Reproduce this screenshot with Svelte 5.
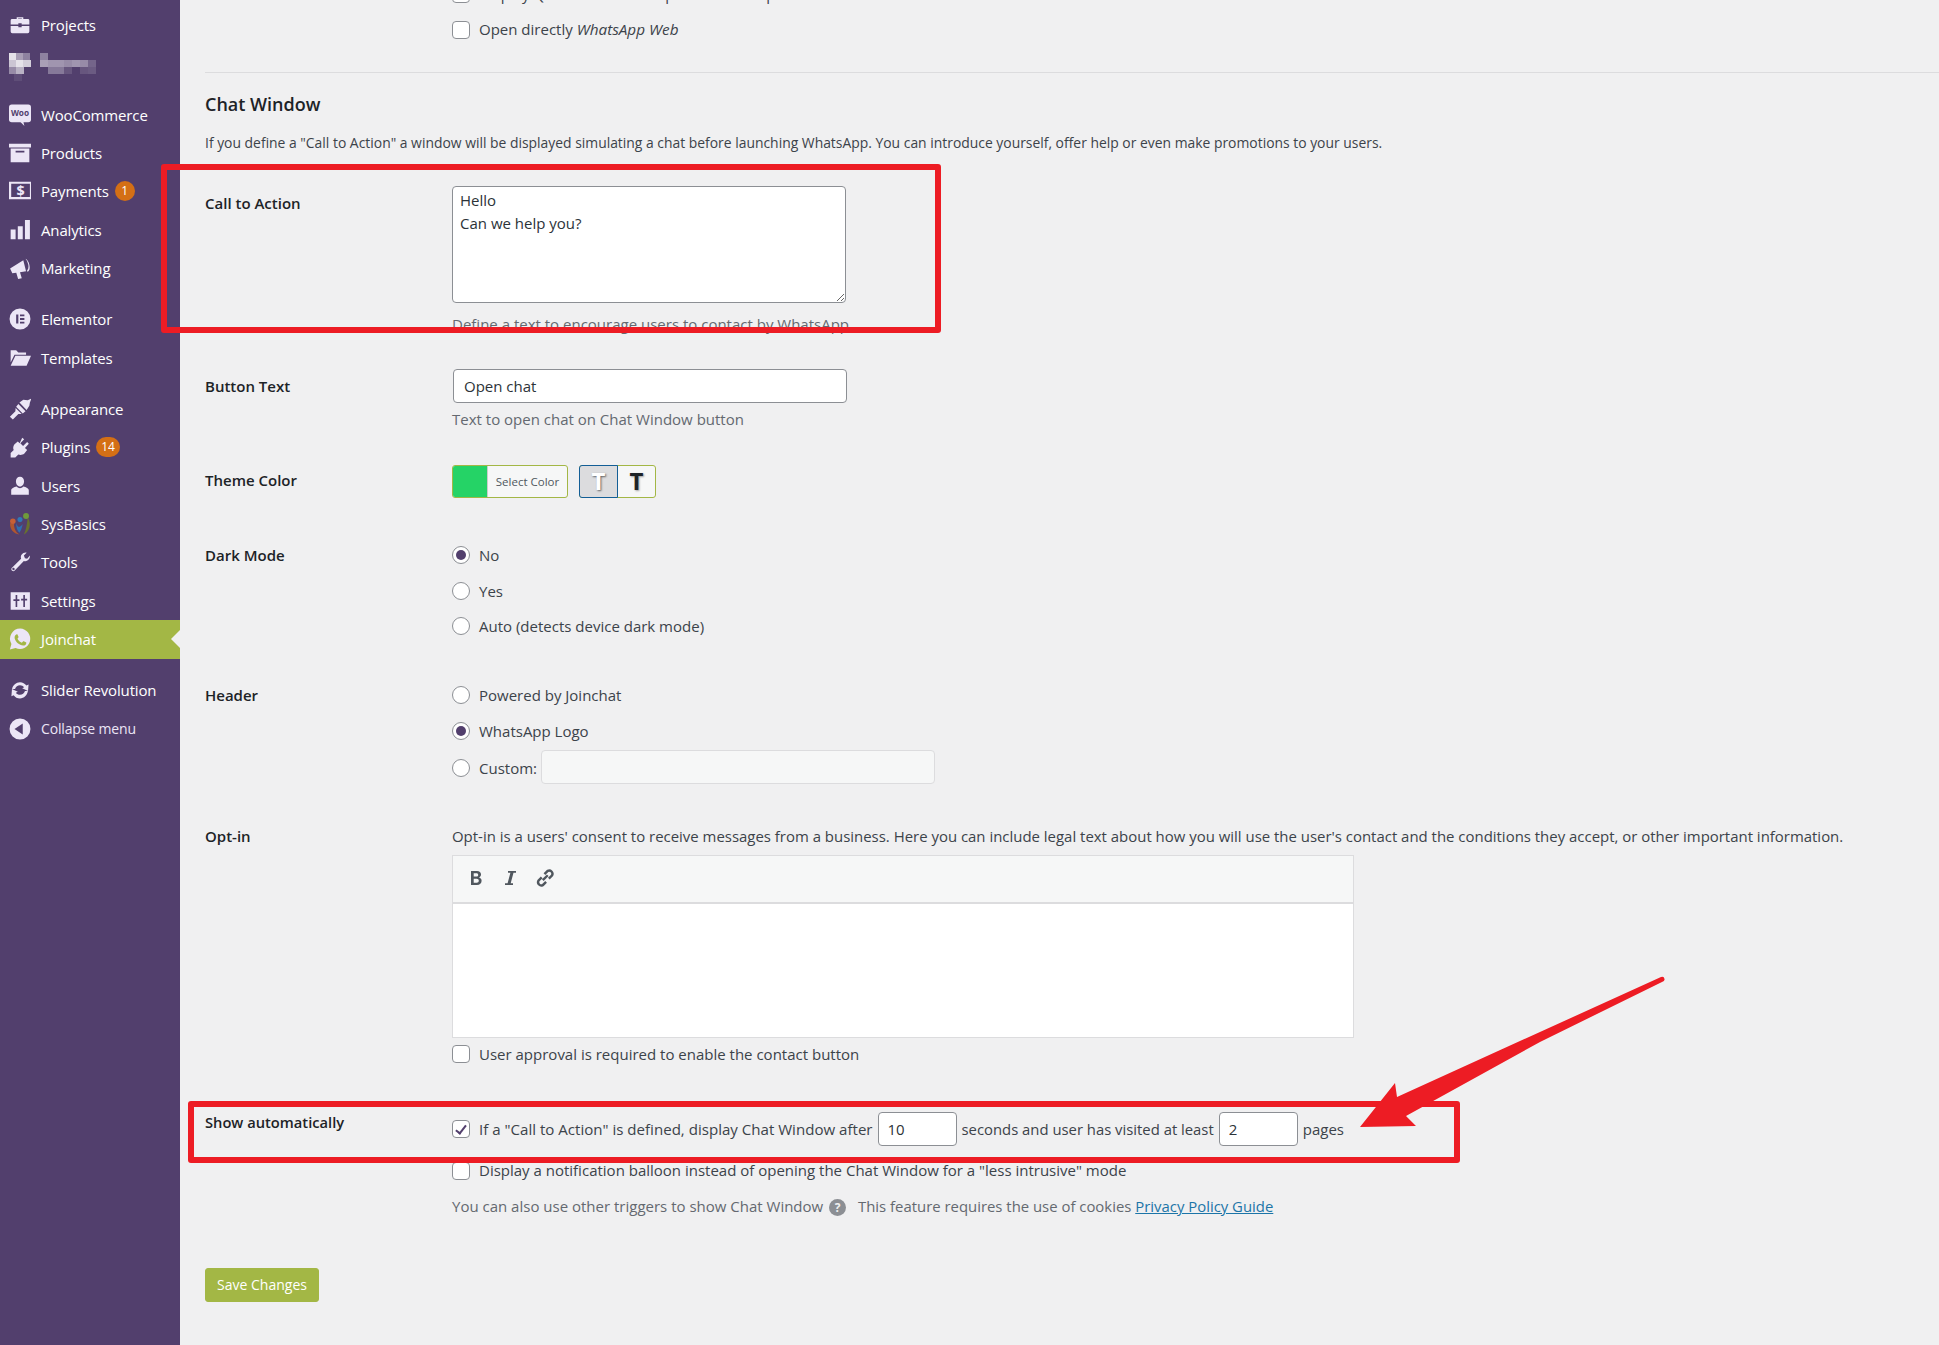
<script>
const menu = [
	{ id: "projects", label: "Projects" },
	{ id: "blur", gap: false },
	{ id: "woo", label: "WooCommerce", sep: true },
	{ id: "products", label: "Products" },
	{ id: "payments", label: "Payments", badge: "1" },
	{ id: "analytics", label: "Analytics" },
	{ id: "marketing", label: "Marketing" },
	{ id: "elementor", label: "Elementor", sep: true },
	{ id: "templates", label: "Templates" },
	{ id: "appearance", label: "Appearance", sep: true },
	{ id: "plugins", label: "Plugins", badge: "14" },
	{ id: "users", label: "Users" },
	{ id: "sysbasics", label: "SysBasics" },
	{ id: "tools", label: "Tools" },
	{ id: "settings", label: "Settings" },
	{ id: "joinchat", label: "Joinchat", active: true },
	{ id: "slider", label: "Slider Revolution", sep: true },
	{ id: "collapse", label: "Collapse menu", small: true }
];

const mosaic = [
	[0, 0, 7, 0.85], [7, 0, 7, 0.5], [14, 0, 7, 0.35], [0, 7, 7, 0.7], [7, 7, 7, 0.85], [14, 7, 8, 0.75],
	[0, 14, 7, 0.4], [7, 14, 8, 0.6], [5, 21, 8, 0.08],
	[31, 0, 8, 0.35], [31, 7, 8, 0.5], [39, 7, 8, 0.45], [47, 7, 8, 0.45], [55, 7, 8, 0.4], [63, 7, 8, 0.45], [71, 7, 8, 0.4], [79, 7, 8, 0.2],
	[39, 14, 8, 0.3], [47, 14, 8, 0.3], [55, 14, 8, 0.12], [71, 14, 8, 0.12], [79, 14, 8, 0.15]
];

const ctaText = "Hello\nCan we help you?";
</script>

<div class="page">
	<nav class="sidebar">
		{#each menu as item}
			{#if item.id === "blur"}
				<div class="item blurred">
					<svg width="90" height="30" viewBox="0 0 90 30">
						{#each mosaic as [x, y, w, o]}
							<rect {x} {y} width={w} height="7" fill="#fff" opacity={o} />
						{/each}
					</svg>
				</div>
			{:else}
				<a class="item" class:sep={item.sep} class:active={item.active} class:small={item.small} href="#top">
					<svg class="icon" viewBox="0 0 20 20" width="22" height="22" fill="currentColor">
						{#if item.id === "projects"}
							<path d="M7 4.500V3h6v1.500h4.200q1.300 0 1.300 1.300V9.500h-7V8.500h-3v1h-7V5.800q0-1.300 1.300-1.300zM8.300 4.500h3.400V4H8.300zM1.500 10.800h7v1.200h3v-1.200h7V16q0 1.500-1.500 1.500H3q-1.500 0-1.500-1.500z" />
						{:else if item.id === "woo"}
							<rect x="0" y="0.500" width="20" height="16" rx="2.500" />
							<path d="M10 16h3l1 4z" />
							<text x="10" y="11.300" class="woo">Woo</text>
						{:else if item.id === "products"}
							<path d="M0 1.500h20V5H0zM1.500 6h17v12.500h-17zM6 8v1.500h8V8z" fill-rule="evenodd" />
						{:else if item.id === "payments"}
							<path d="M0 1.500h21v16H0zM2 3.500v12h17v-12z" fill-rule="evenodd" />
							<text x="10.500" y="14.300" class="dollar">$</text>
						{:else if item.id === "analytics"}
							<path d="M1.500 9.500h4.500v9H1.500zM8 6.500h4.500v12H8zM14.500 1h4.500v17.500h-4.500z" />
						{:else if item.id === "marketing"}
							<path d="M1 10.500 13 3l2.500 10-5.500.8 1.600 5.500-3.300.7-1.700-5.700-3.600.5zM15 1.500a3.200 6.200-15 0 1 3.500 5.500 3.200 6.200-15 0 1-2 6.500 3 6-15 0 0 0-1.500 3 6-15 0 0-1.500-10.500z" />
						{:else if item.id === "elementor"}
							<path d="M10 .5a9.500 9.500 0 1 0 0 19 9.500 9.500 0 0 0 0-19zM6.500 6h2v8h-2zM10 6h4v1.600h-4zM10 9.200h4v1.600h-4zM10 12.400h4V14h-4z" fill-rule="evenodd" />
						{:else if item.id === "templates"}
							<path d="M1.500 14V3h5l2 2h7v2H5L1.500 14zM5.800 8H20l-4 9H1.500z" />
						{:else if item.id === "appearance"}
							<path d="M9.500 4 13 1.500 17 2 20.500.5 19 4 18.500 7 16 11zM8.500 5.500 15 12 12.500 14 6.500 8zM6 9 11.500 14.500 8.500 14.500 3.500 19.500.8 17 5.800 12z" />
						{:else if item.id === "plugins"}
							<path d="m12 1.500 1.800 1.500-3.500 3.700 2.500 2.300L16.500 5.500 18 7l-3.500 3.800 2 2-2.500 3.200c-2 1.500-4 1.500-5.500.8l-2.800 2.700H1.500v-4l2.800-2.700c-.8-1.700-.6-3.600.7-5.300l3-2.500 1.700 1.700z" />
						{:else if item.id === "users"}
							<path d="M10 1.500c2.200 0 3.700 1.700 3.700 4.200S12.200 10.500 10 10.500 6.300 8.200 6.300 5.700 7.800 1.500 10 1.500zM7 10.500c1.800 2 4.200 2 6 0 2.600.6 5 1.600 5 3.500v4H2v-4c0-1.900 2.400-2.900 5-3.500z" />
						{:else if item.id === "sysbasics"}
							<path d="M1 9c-.5 5 3 10 8.500 10.500C6 17.500 4.500 14 4.500 9.500z" fill="#b0562f" />
							<path d="M17 4c3.500 5 2 13-3.500 15.500 2-4.500 3-9.500 3.500-15.500z" fill="#68702f" />
							<path d="M6.500 9c1.500 4 3 5 6 1-1 4-1.500 6-3 8-2-2-3-5-3-9z" fill="#2f6fb0" />
							<circle cx="3.500" cy="7.500" r="2.500" fill="#c75f35" />
							<circle cx="15.500" cy="2.700" r="2.700" fill="#6f9a3a" />
							<circle cx="10" cy="6" r="2.300" fill="#2f78b7" />
						{:else if item.id === "tools"}
							<path d="M19 4.200c.4 3-2.200 5.800-5.500 4.800L5 18c-1.300 1.300-3.800-.8-2.500-2.500L11 7c-1-3 1.500-6 5-5.500L13.500 4l1 2.500 2 .5zM4 15.200a1.100 1.100 0 1 0 .1 2.200 1.100 1.100 0 0 0-.1-2.200z" fill-rule="evenodd" />
						{:else if item.id === "settings"}
							<path d="M1.500 2h17.500v16H1.500zM6 4.500v4H4v1.500h2v5.500h1.500V10h2V8.500h-2v-4zM13 4.500V8h-2v1.500h2v6h1.500v-6h2V8h-2V4.500z" fill-rule="evenodd" />
						{:else if item.id === "joinchat"}
							<path d="M10.200 .5a9.300 9.300 0 0 0-8 14L.8 19.500l5.200-1.300A9.300 9.300 0 1 0 10.200 .5zM6.800 5.500c.5 0 .8.100 1 .6l.8 1.800c.1.300 0 .6-.2.900l-.7.900c.9 1.700 2.200 2.900 4 3.700l1-1.200c.2-.3.500-.3.800-.2l1.800.9c.4.200.5.400.4.900-.2 1.600-1.500 2.300-2.900 2.200-3.500-.4-6.800-3.300-7.600-6.500-.4-1.700.5-3.700 2.600-4z" fill-rule="evenodd" />
						{:else if item.id === "slider"}
							<path d="M10 3c2.400 0 4.500 1.200 5.800 3l2-1-.5 6-5.300-2.500 1.800-1c-.9-1.200-2.300-1.900-3.800-1.900-2.100 0-3.900 1.400-4.500 3.400H2.800C3.500 5.800 6.400 3 10 3zM2.700 9l5.300 2.500-1.800 1c.9 1.200 2.300 1.900 3.800 1.900 2.100 0 3.900-1.400 4.500-3.400h2.700c-.7 3.900-3.600 6.700-7.200 6.700-2.400 0-4.500-1.200-5.800-3l-2 1z" />
						{:else if item.id === "collapse"}
							<path d="M10 .5a9.500 9.500 0 1 0 0 19 9.500 9.500 0 0 0 0-19zM12.500 5v10L5 10z" fill-rule="evenodd" />
						{/if}
					</svg>
					<span>{item.label}</span>
					{#if item.badge}<b class="badge">{item.badge}</b>{/if}
				</a>
			{/if}
		{/each}
	</nav>

	<main class="content">
		<div class="option"><input type="checkbox" /><span>Display QR code on desktop to scan with phone</span></div>
		<div class="option second"><input type="checkbox" /><span class="lift">Open directly <em>WhatsApp Web</em></span></div>
		<hr />

		<h2>Chat Window</h2>
		<p class="intro">If you define a "Call to Action" a window will be displayed simulating a chat before launching WhatsApp. You can introduce yourself, offer help or even make promotions to your users.</p>

		<div class="row cta">
			<div class="label">Call to Action</div>
			<div>
				<textarea value={ctaText}></textarea>
				<p class="help">Define a text to encourage users to contact by WhatsApp</p>
			</div>
		</div>

		<div class="row btn-text">
			<div class="label">Button Text</div>
			<div>
				<input class="text wide" type="text" value="Open chat" />
				<p class="help tight">Text to open chat on Chat Window button</p>
			</div>
		</div>

		<div class="row theme">
			<div class="label">Theme Color</div>
			<div class="theme-controls">
				<div class="color-btn"><i></i><span>Select Color</span></div>
				<div class="t-toggle">
					<span class="t light">T</span>
					<span class="t dark">T</span>
				</div>
			</div>
		</div>

		<div class="row dark-mode">
			<div class="label">Dark Mode</div>
			<div class="radios">
				<div class="option"><input type="radio" name="dark" checked /><span>No</span></div>
				<div class="option"><input type="radio" name="dark" /><span>Yes</span></div>
				<div class="option"><input type="radio" name="dark" /><span>Auto (detects device dark mode)</span></div>
			</div>
		</div>

		<div class="row header">
			<div class="label">Header</div>
			<div class="radios">
				<div class="option"><input type="radio" name="head" /><span>Powered by Joinchat</span></div>
				<div class="option"><input type="radio" name="head" checked /><span>WhatsApp Logo</span></div>
				<div class="option custom"><input type="radio" name="head" /><span>Custom:</span><input class="text faded" type="text" /></div>
			</div>
		</div>

		<div class="row optin">
			<div class="label">Opt-in</div>
			<div>
				<p class="body-text">Opt-in is a users' consent to receive messages from a business. Here you can include legal text about how you will use the user's contact and the conditions they accept, or other important information.</p>
				<div class="editor">
					<div class="toolbar">
						<svg viewBox="0 0 20 20" width="20" height="20" fill="#50575e"><path d="M5 3h6c2.500 0 4 1.300 4 3.400 0 1.400-.8 2.500-2 3 1.600.4 2.600 1.600 2.600 3.300 0 2.500-1.800 4.300-4.600 4.300H5zm2.700 2.200v3.400h2.700c1.100 0 1.800-.7 1.800-1.700s-.7-1.700-1.800-1.700zm0 5.500v4.100h3c1.300 0 2.100-.8 2.100-2s-.8-2.100-2.100-2.100z" /></svg>
						<svg viewBox="0 0 20 20" width="20" height="20" fill="#50575e"><path d="M8 3h8v1.700h-2.500L10.700 15.300H13V17H5v-1.700h2.600L10.400 4.700H8z" /></svg>
						<svg viewBox="0 0 20 20" width="22" height="22" fill="none" stroke="#50575e" stroke-width="2.200"><path d="M8 12 12.500 7.500M7 9.500l-3 3a3 3 0 0 0 4 4l3-3M9.500 6.500l3-3a3 3 0 0 1 4 4l-3 3" /></svg>
					</div>
					<div class="editor-body"></div>
				</div>
				<div class="option approval"><input type="checkbox" /><span>User approval is required to enable the contact button</span></div>
			</div>
		</div>

		<div class="row auto">
			<div class="label">Show automatically</div>
			<div>
				<div class="option triggers">
					<input type="checkbox" checked />
					<span class="after">If a "Call to Action" is defined, display Chat Window after</span>
					<input class="text num" type="text" value="10" />
					<span class="visited">seconds and user has visited at least</span>
					<input class="text num" type="text" value="2" />
					<span>pages</span>
				</div>
				<div class="option balloon"><input type="checkbox" /><span class="lift">Display a notification balloon instead of opening the Chat Window for a "less intrusive" mode</span></div>
				<p class="help last">You can also use other triggers to show Chat Window <i class="q">?</i> <span class="cookies">This feature requires the use of cookies <a href="#top">Privacy Policy Guide</a></span></p>
			</div>
		</div>

		<button class="save">Save Changes</button>
	</main>

	<div class="mark one"></div>
	<div class="mark two"></div>
	<svg class="arrow" width="1939" height="1345" viewBox="0 0 1939 1345">
		<path d="M1360 1127 1395 1083 1397 1097 1661 977Q1664 976 1664.500 979 1665 981 1662 982L1540 1042 1406 1116 1416 1126 1360 1127z" fill="#ed1c24" />
	</svg>
</div>

<style>
	:global(body) {
		margin: 0;
		background: #f0f0f1;
		overflow: hidden;
	}

	.page {
		position: relative;
		display: grid;
		grid-template-columns: 180px 1fr;
		height: 1345px;
		overflow: hidden;
		font-family: "Open Sans", sans-serif;
		font-size: 15px;
		line-height: 24px;
		color: #3c434a;
	}

	.sidebar {
		background: #523f6d;
		padding-top: 6px;
	}

	.item {
		display: flex;
		align-items: center;
		height: 38.45px;
		padding-left: 9px;
		box-sizing: border-box;
		color: #ece6f6;
		text-decoration: none;
		position: relative;
	}

	.item span {
		margin-left: 10px;
		color: #fff;
		font-size: 15px;
		letter-spacing: -0.15px;
	}

	.item.sep {
		margin-top: 12.5px;
	}

	.item.small span {
		font-size: 14px;
		color: #ece6f6;
	}

	.item.active {
		background: #a3b745;
	}

	.item.active::after {
		content: "";
		position: absolute;
		right: 0;
		top: 50%;
		margin-top: -9px;
		border: 9px solid transparent;
		border-right-color: #f0f0f1;
	}

	.blurred {
		padding-left: 9px;
		align-items: flex-start;
		padding-top: 9px;
	}

	.badge {
		flex: none;
		margin-left: 6px;
		min-width: 20px;
		height: 20px;
		padding: 0 5px;
		box-sizing: border-box;
		border-radius: 10px;
		background: #d46f15;
		color: #fff;
		font-size: 12px;
		font-weight: 400;
		line-height: 20px;
		text-align: center;
	}

	.woo {
		font: 700 7.5px "Open Sans", sans-serif;
		fill: #523f6d;
		text-anchor: middle;
	}

	.dollar {
		font: 700 13px "Open Sans", sans-serif;
		text-anchor: middle;
	}

	.content {
		padding-left: 25px;
		margin-top: -18px;
		min-width: 0;
	}

	.option {
		display: flex;
		align-items: center;
		height: 24px;
	}

	.lift {
		position: relative;
		top: -1px;
	}

	em {
		font-size: 15.3px;
	}

	.option input[type="checkbox"],
	.option input[type="radio"] {
		appearance: none;
		flex: none;
		width: 18px;
		height: 18px;
		margin: 0 9px 0 0;
		box-sizing: border-box;
		border: 1px solid #8c8f94;
		background: #fff;
		position: relative;
	}

	input[type="checkbox"] {
		border-radius: 4px;
	}

	input[type="radio"] {
		border-radius: 50%;
	}

	input[type="radio"]:checked::before {
		content: "";
		position: absolute;
		inset: 3px;
		border-radius: 50%;
		background: #523f6d;
	}

	input[type="checkbox"]:checked::before {
		content: "";
		position: absolute;
		left: 5px;
		top: 1.500px;
		width: 4px;
		height: 9px;
		border: solid #523f6d;
		border-width: 0 2.500px 2.500px 0;
		transform: rotate(38deg);
	}

	.second {
		margin-top: 12px;
	}

	.content > .option {
		margin-left: 247px;
	}

	hr {
		margin: 30px 0 0;
		border: 0;
		border-top: 1px solid #dcdcde;
	}

	h2 {
		margin: 18px 0 0;
		font-size: 18px;
		line-height: 26px;
		font-weight: 600;
		color: #1d2327;
	}

	p {
		margin: 0;
	}

	.intro {
		margin-top: 14px;
		font-size: 13.9px;
	}

	.body-text {
		font-size: 14.94px;
		position: relative;
		top: -1px;
	}

	.row {
		display: grid;
		grid-template-columns: 247px 1fr;
	}

	.label {
		color: #1d2327;
		font-weight: 600;
		font-size: 15px;
	}

	.cta {
		margin-top: 31px;
	}

	.cta .label {
		padding-top: 5px;
	}

	textarea {
		display: block;
		width: 394px;
		height: 117px;
		box-sizing: border-box;
		padding: 2px 7px 3px;
		border: 1px solid #8c8f94;
		border-radius: 4px;
		font: inherit;
		line-height: 23px;
		color: #2c3338;
		background: #fff;
	}

	.help {
		margin-top: 9px;
		color: #646970;
	}

	.help.tight {
		margin-top: 4px;
	}

	.btn-text {
		margin-top: 33px;
	}

	.btn-text .label {
		padding-top: 5px;
	}

	.text {
		height: 34px;
		box-sizing: border-box;
		padding: 0 10px;
		border: 1px solid #8c8f94;
		border-radius: 4px;
		background: #fff;
		font: inherit;
		color: #2c3338;
		display: block;
	}

	.wide {
		width: 394px;
		margin-left: 1px;
	}

	.theme {
		margin-top: 34px;
	}

	.theme .label {
		padding-top: 3px;
	}

	.theme-controls {
		display: flex;
		gap: 11px;
	}

	.color-btn {
		display: flex;
		width: 116px;
		height: 33px;
		box-sizing: border-box;
		border: 1px solid #a3b745;
		border-radius: 3px;
		background: #f6f7f7;
		overflow: hidden;
	}

	.color-btn i {
		width: 34px;
		background: #25d366;
		border-right: 1px solid #ccc;
	}

	.color-btn span {
		flex: 1;
		text-align: center;
		font-size: 11.500px;
		line-height: 31px;
		color: #50575e;
		white-space: nowrap;
	}

	.t-toggle {
		display: flex;
		width: 77px;
		height: 33px;
		box-sizing: border-box;
		border: 1px solid #a3b745;
		border-radius: 3px;
		background: #f6f7f7;
	}

	.t {
		flex: 1;
		text-align: center;
		font-size: 24px;
		font-weight: 700;
		line-height: 30px;
	}

	.t.light {
		margin: -1px 0 -1px -1px;
		border: 1px solid #135e96;
		border-radius: 3px 0 0 3px;
		background: #dcdcde;
		color: #fff;
		text-shadow: 1px 1px 2px #0000008c;
	}

	.t.dark {
		color: #1d2327;
		text-shadow: 1px 1px 2px #00000059;
	}

	.dark-mode {
		margin-top: 45px;
	}

	.dark-mode .radios {
		display: grid;
		row-gap: 11.500px;
	}

	.header {
		margin-top: 45px;
	}

	.header .radios {
		display: grid;
		row-gap: 12px;
	}

	.custom {
		height: 34px !important;
		margin-top: -5px;
	}

	.custom input[type="radio"] {
		top: 1px;
	}

	.custom span {
		position: relative;
		top: 1px;
	}

	.faded {
		width: 394px;
		margin-left: 4px;
		background: #f6f7f7;
		border-color: #dcdcde;
	}

	.optin {
		margin-top: 41px;
	}

	.optin .label {
		margin-top: -1px;
	}

	.editor {
		width: 902px;
		margin-top: 6px;
		box-sizing: border-box;
		border: 1px solid #dcdcde;
		background: #fff;
	}

	.toolbar {
		display: flex;
		gap: 14px;
		align-items: center;
		height: 48px;
		padding: 0 0 2px 13px;
		background: #f6f7f7;
		border-bottom: 2px solid #dcdcde;
		box-sizing: border-box;
	}

	.editor-body {
		height: 133px;
	}

	.approval {
		margin-top: 4px;
	}

	.auto {
		margin-top: 46px;
	}

	.auto .label {
		font-size: 14.700px;
		margin-top: -2px;
	}

	.triggers {
		height: 34px;
	}

	.after {
		font-size: 15.08px;
	}

	.visited {
		font-size: 14.85px;
	}

	.num {
		width: 79px;
		margin: 0 5px;
		padding: 0 9px;
	}

	.balloon {
		margin-top: 13px;
	}

	.help.last {
		margin-top: 11px;
		white-space: nowrap;
	}

	.q {
		display: inline-block;
		width: 17px;
		height: 17px;
		margin-left: 2px;
		border-radius: 50%;
		background: #8c8f94;
		color: #f0f0f1;
		font-size: 12px;
		font-weight: 700;
		font-style: normal;
		line-height: 17px;
		text-align: center;
		vertical-align: 0;
	}

	.cookies {
		margin-left: 8px;
		font-size: 14.9px;
	}

	a {
		color: #1c75a8;
	}

	.save {
		display: block;
		margin-top: 50px;
		width: 114px;
		height: 34px;
		padding: 0 0 2px;
		border: 1px solid #a3b745;
		border-radius: 3px;
		background: #a3b745;
		color: #fff;
		font: 14px "Open Sans", sans-serif;
	}

	.mark {
		position: absolute;
		box-sizing: border-box;
		border: 6px solid #ed1c24;
		border-radius: 3px;
		pointer-events: none;
	}

	.one {
		left: 161px;
		top: 164px;
		width: 780px;
		height: 169px;
	}

	.two {
		left: 188px;
		top: 1101px;
		width: 1272px;
		height: 62px;
	}

	.arrow {
		position: absolute;
		left: 0;
		top: 0;
		pointer-events: none;
	}
</style>
